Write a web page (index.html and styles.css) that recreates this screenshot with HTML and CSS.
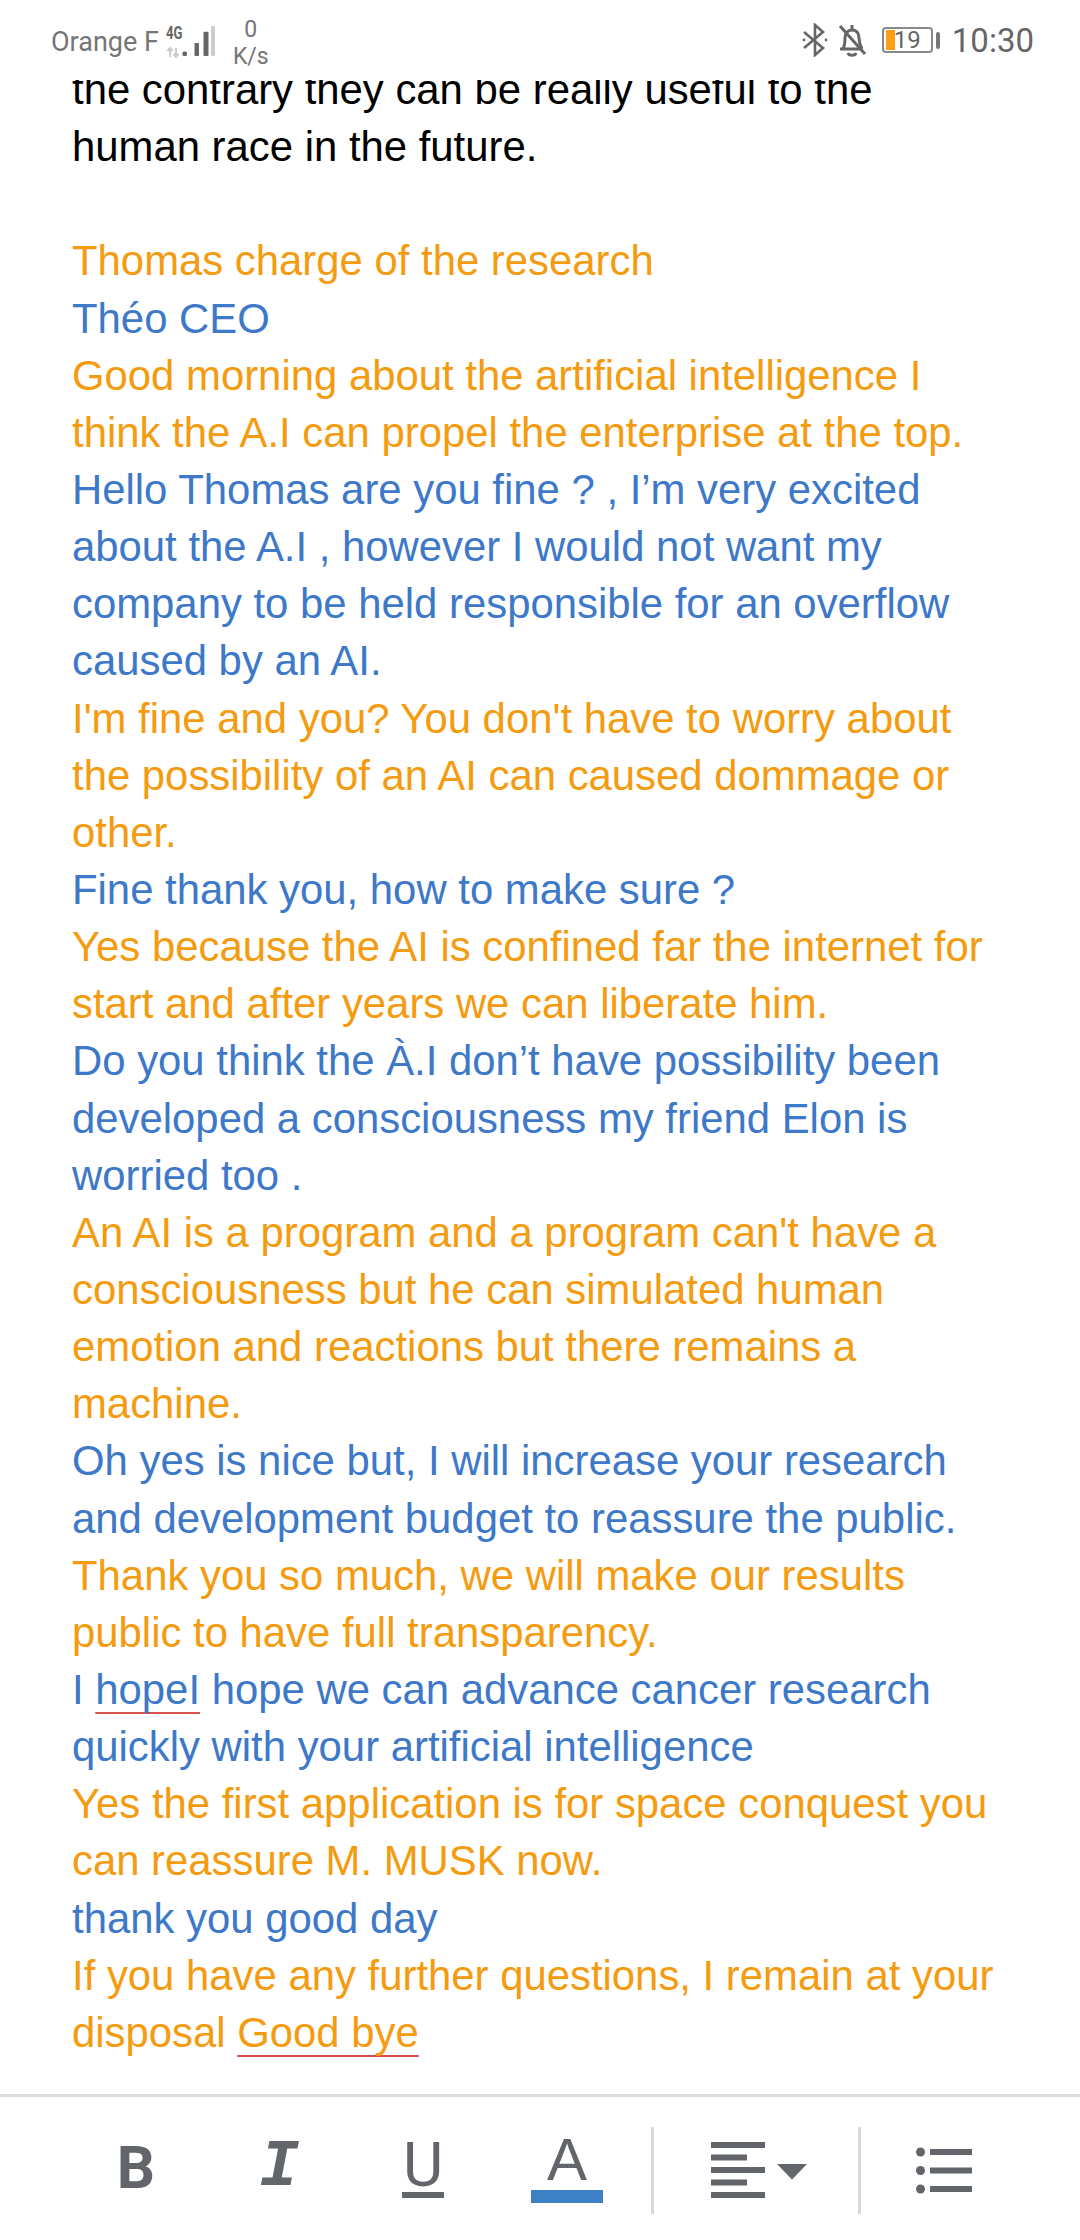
FILE: index.html
```html
<!DOCTYPE html>
<html lang="en">
<head>
<meta charset="UTF-8">
<title>Document editor</title>
<link rel="stylesheet" href="styles.css">
</head>
<body>
<div class="phone">
  <div class="statusbar">
    <div class="status-left">
      <span class="carrier">Orange F</span>
      <svg class="signal" width="50" height="34" viewBox="0 0 50 34">
        <text x="0" y="13" class="net-label" textLength="16.500" lengthAdjust="spacingAndGlyphs">4G</text>
        <path d="M4 31V22M1.500 25L4 22L6.500 25M10 22V31M7.500 28L10 31L12.500 28" fill="none" stroke="#ccc" stroke-width="2"/>
        <rect x="16.500" y="25.500" width="4.500" height="4.500" rx="1.500" fill="#666"/>
        <rect x="28.500" y="17" width="4.500" height="13" rx="1" fill="#666"/>
        <rect x="37.500" y="5.700" width="5" height="24.300" rx="1" fill="#666"/>
        <rect x="45" y="0" width="4" height="30" rx="1" fill="#ccc"/>
      </svg>
      <div class="speed"><span>0</span><span>K/s</span></div>
    </div>
    <div class="status-right">
      <svg width="28" height="34" viewBox="0 0 28 34" fill="none" stroke="#666" stroke-width="2.600">
        <path d="M3 9L22 25L14 32V2L22 9L3 25"/>
        <circle cx="3" cy="17" r="1.400" fill="#666" stroke="none"/>
        <circle cx="25" cy="17" r="1.400" fill="#666" stroke="none"/>
      </svg>
      <svg class="bell" width="30" height="34" viewBox="0 0 30 34" fill="none" stroke="#666" stroke-width="3">
        <path d="M3 26H25M6 26C8 22 8 19 8 15C8 10 11 7 15 7C20 7 22 11 22 15C22 19 23 22 25 26"/>
        <path d="M15 2V6M11 30C12 33 18 33 19 30"/>
        <path d="M3 3L28 31"/>
      </svg>
      <div class="battery"><span class="battery-level"></span><span class="battery-num">19</span></div>
      <span class="battery-tip"></span>
      <span class="clock">10:30</span>
    </div>
  </div>

  <div class="doc">
    <div class="doc-text">
      <p class="black">the contrary they can be really useful to the<br>human race in the future.</p>
      <p class="gap"><br></p>
      <p class="orange">Thomas charge of the research</p>
      <p class="blue">Théo CEO</p>
      <p class="orange">Good morning about the artificial intelligence I<br>think the A.I can propel the enterprise at the top.</p>
      <p class="blue">Hello Thomas are you fine ? , I’m very excited<br>about the A.I , however I would not want my<br>company to be held responsible for an overflow<br>caused by an AI.</p>
      <p class="orange">I'm fine and you? You don't have to worry about<br>the possibility of an AI can caused dommage or<br>other.</p>
      <p class="blue">Fine thank you, how to make sure ?</p>
      <p class="orange">Yes because the AI is confined far the internet for<br>start and after years we can liberate him.</p>
      <p class="blue">Do you think the À.I don’t have possibility been<br>developed a consciousness my friend Elon is<br>worried too .</p>
      <p class="orange">An AI is a program and a program can't have a<br>consciousness but he can simulated human<br>emotion and reactions but there remains a<br>machine.</p>
      <p class="blue">Oh yes is nice but, I will increase your research<br>and development budget to reassure the public.</p>
      <p class="orange">Thank you so much, we will make our results<br>public to have full transparency.</p>
      <p class="blue">I <span class="spell">hopeI</span> hope we can advance cancer research<br>quickly with your artificial intelligence</p>
      <p class="orange">Yes the first application is for space conquest you<br>can reassure M. MUSK now.</p>
      <p class="blue">thank you good day</p>
      <p class="orange">If you have any further questions, I remain at your<br>disposal <span class="spell">Good bye</span></p>
    </div>
  </div>

  <div class="toolbar">
    <div class="tool tool-b">B</div>
    <div class="tool tool-i">I</div>
    <div class="tool tool-u"><span class="u-letter">U</span></div>
    <div class="tool tool-a"><span class="a-letter">A</span></div>
    <div class="sep"></div>
    <div class="tool tool-align">
      <svg width="96" height="56" viewBox="0 0 96 56" fill="#626569">
        <rect x="0" y="0" width="54" height="6"/>
        <rect x="0" y="12.500" width="36" height="6"/>
        <rect x="0" y="25" width="54" height="6"/>
        <rect x="0" y="37.500" width="36" height="6"/>
        <rect x="0" y="50" width="54" height="6"/>
        <path d="M66 22H96L81 37.500Z"/>
      </svg>
    </div>
    <div class="sep"></div>
    <div class="tool tool-list">
      <svg width="56" height="47" viewBox="0 0 56 47" fill="#626569">
        <circle cx="4.500" cy="5" r="4.500"/>
        <circle cx="4.500" cy="23.500" r="4.500"/>
        <circle cx="4.500" cy="42" r="4.500"/>
        <rect x="14" y="2" width="42" height="6"/>
        <rect x="14" y="20.500" width="42" height="6"/>
        <rect x="14" y="39" width="42" height="6"/>
      </svg>
    </div>
  </div>
</div>
</body>
</html>
```

FILE: styles.css
```css
* {
    box-sizing: border-box;
}

body {
    margin: 0;
    background: white;
}

.phone {
    width: 1080px;
    height: 2240px;
    display: flex;
    flex-direction: column;
    overflow: hidden;
    background: #ffffff;
}

/* status bar */
.statusbar {
    height: 80px;
    flex-shrink: 0;
    display: flex;
    justify-content: space-between;
    padding: 14px 46px 0 51px;
    font-family: Roboto, sans-serif;
    color: #666666;
    background: #ffffff;
}

.status-left {
    display: flex;
    align-items: flex-start;
}

.carrier {
    font-size: 27px;
    line-height: 32px;
    margin-top: 12px;
    white-space: nowrap;
    color: #757575;
}

.signal {
    margin: 12px 0 0 7px;
}

.net-label {
    font-family: Roboto, sans-serif;
    font-weight: bold;
    font-size: 18px;
    fill: #666666;
}

.speed {
    display: flex;
    flex-direction: column;
    align-items: center;
    font-size: 23px;
    line-height: 27px;
    margin: 2px 0 0 17px;
    color: #757575;
}

.status-right {
    display: flex;
    align-items: flex-start;
}

.status-right svg {
    margin-top: 9px;
}

.status-right .bell {
    margin-left: 8px;
}

.battery {
    position: relative;
    width: 51px;
    height: 26px;
    margin: 13px 0 0 15px;
    border: 2px solid #8a8a8a;
    border-radius: 4px;
    font-size: 24px;
    line-height: 22px;
}

.battery-level {
    position: absolute;
    left: 2px;
    top: 1px;
    width: 9px;
    height: 20px;
    background: #ff9d17;
}

.battery-num {
    position: absolute;
    left: 10px;
    top: 0;
    color: #666666;
}

.battery-tip {
    width: 4px;
    height: 17px;
    margin: 18px 0 0 3px;
    background: #777777;
    border-radius: 2px;
}

.clock {
    font-size: 33px;
    line-height: 40px;
    margin: 7px 0 0 12px;
}

/* document */
.doc {
    flex: 1;
    overflow: hidden;
    padding: 0 40px 0 72px;
    font-family: "Liberation Sans", Arial, sans-serif;
    font-size: 41.870px;
    line-height: 57.140px;
}

.doc-text {
    margin-top: -19px;
    white-space: nowrap;
}

.doc p {
    margin: 0;
}

.black {
    color: #000000;
}

.orange {
    color: #f59b0f;
}

.blue {
    color: #3d78c9;
}

.spell {
    text-decoration: underline;
    text-decoration-color: #d8504d;
    text-decoration-thickness: 2px;
    text-underline-offset: 8px;
    text-decoration-skip-ink: none;
}

/* toolbar */
.toolbar {
    height: 146px;
    flex-shrink: 0;
    display: flex;
    align-items: center;
    padding: 3px 0 0 66px;
    border-top: 3px solid #dcdcde;
    color: #626569;
    background: #ffffff;
}

.tool {
    display: flex;
    justify-content: center;
    align-items: center;
    height: 87px;
}

.tool-b {
    width: 140px;
    padding-bottom: 6px;
    font-family: Roboto, sans-serif;
    font-weight: bold;
    font-size: 60px;
}

.tool-i {
    width: 146px;
    padding-bottom: 6px;
    font-family: "Liberation Mono", monospace;
    font-weight: bold;
    font-style: italic;
    font-size: 66px;
}

.tool-u {
    width: 142px;
}

.u-letter {
    font-family: Roboto, sans-serif;
    font-size: 62px;
    line-height: 46px;
    height: 56px;
    width: 42px;
    display: flex;
    justify-content: center;
    border-bottom: 6px solid #626569;
}

.tool-a {
    width: 146px;
}

.a-letter {
    font-family: "Liberation Sans", sans-serif;
    font-size: 60px;
    line-height: 46px;
    width: 72px;
    height: 66px;
    text-align: center;
    border-bottom: 13px solid #3d80c4;
}

.sep {
    width: 3px;
    height: 87px;
    margin-left: 11px;
    background: #d9d9d9;
}

.tool-align {
    margin-left: 57px;
}

.tool-align + .sep {
    margin-left: 51px;
}

.tool-list {
    margin-left: 55px;
}
```
